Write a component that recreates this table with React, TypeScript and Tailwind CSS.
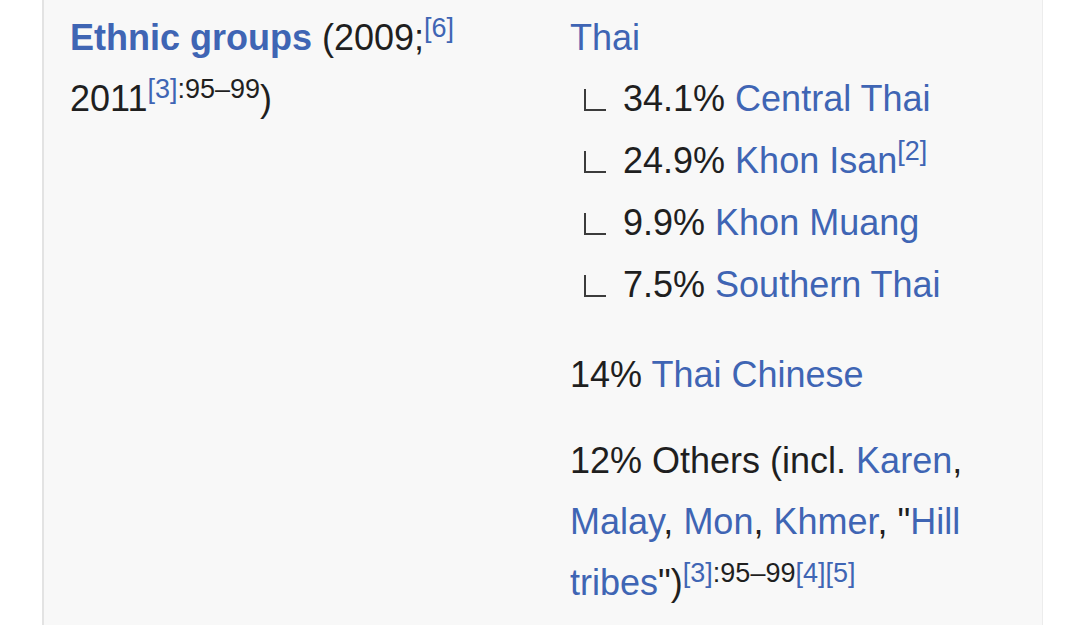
const link = "text-[#3f65b4]";

function Sup({ children, blue = true }: { children: React.ReactNode; blue?: boolean }) {
  return <sup className={blue ? link : "text-[#202122]"}>{children}</sup>;
}

function SubRow({ pct, name, note }: { pct: string; name: string; note?: string }) {
  return (
    <div className="whitespace-nowrap leading-[62px]">
      <span className="inline-block w-[22px] h-[22px] ml-[14px] mr-[17px] border-l-2 border-b-2 border-[#3c3c3c]" />
      <span>{pct} </span>
      <span className={link}>{name}</span>
      {note && <Sup>{note}</Sup>}
    </div>
  );
}

export default function App() {
  return (
    <div
      className="min-h-screen bg-white text-[#1f1f1f] text-[36px] leading-[61px]"
      style={{ fontFamily: '"Liberation Sans", Arial, sans-serif' }}
    >
      <div className="ml-[42px] w-[1001px] min-h-[625px] bg-[#f8f8f8] border-l-2 border-l-[#e3e3e3] border-r border-r-[#ececec] flex pt-[7px]">
        <div className="w-[526px] pl-[26px] pr-[80px]">
          <span className={`${link} font-bold`}>Ethnic groups</span> (2009;<Sup>[6]</Sup> 2011
          <Sup>[3]</Sup>
          <sup>:95–99</sup>)
        </div>

        <div className="w-[445px]">
          <div className={link}>Thai</div>
          <SubRow pct="34.1%" name="Central Thai" />
          <SubRow pct="24.9%" name="Khon Isan" note="[2]" />
          <SubRow pct="9.9%" name="Khon Muang" />
          <SubRow pct="7.5%" name="Southern Thai" />

          <div className="mt-[28px]">
            14% <span className={link}>Thai Chinese</span>
          </div>

          <div className="mt-[25px]">
            12% Others (incl. <span className={link}>Karen</span>,{" "}
            <span className={link}>Malay</span>, <span className={link}>Mon</span>,{" "}
            <span className={link}>Khmer</span>, "<span className={link}>Hill tribes</span>")
            <Sup>[3]</Sup>
            <sup>:95–99</sup>
            <Sup>[4]</Sup>
            <Sup>[5]</Sup>
          </div>
        </div>
      </div>
    </div>
  );
}
